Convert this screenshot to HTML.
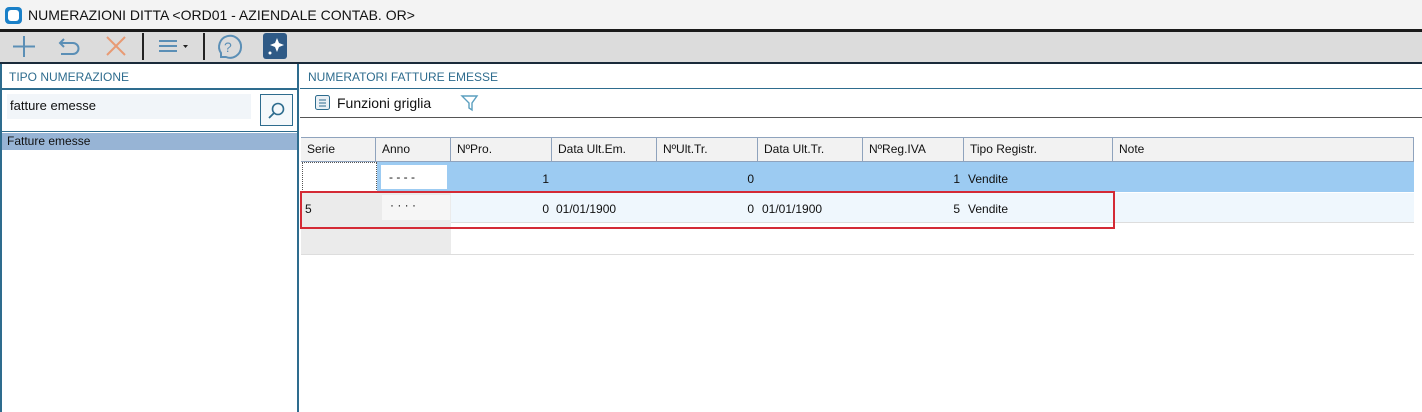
<!DOCTYPE html>
<html><head><style>
*{margin:0;padding:0;box-sizing:border-box}
body{width:1422px;height:412px;overflow:hidden;background:#fff;font-family:"Liberation Sans","DejaVu Sans",sans-serif;font-size:12px;color:#111;position:relative}
.a{position:absolute}
.hd{position:absolute;top:137px;height:25px;background:#f2f2f2;border-right:1px solid #8fa3bd;border-bottom:1px solid #8fa3bd;border-top:1px solid #8fa3bd;padding:4px 0 0 6px}
.c{position:absolute;height:30px;padding-top:10px}
</style></head><body>
<div class="a" style="left:0;top:0;width:1422px;height:30px;background:#f3f3f3"></div>
<div class="a" style="left:5px;top:7px;width:17px;height:17px;background:#1a80c8;border-radius:4px"><div style="margin:3px;width:11px;height:11px;background:#fff;border-radius:3px"></div></div>
<div class="a" style="left:28px;top:7px;font-size:14px;color:#111">NUMERAZIONI DITTA &lt;ORD01 - AZIENDALE CONTAB. OR&gt;</div>
<div class="a" style="left:0;top:29px;width:1422px;height:3px;background:#1a1a1a"></div>
<div class="a" style="left:0;top:32px;width:1422px;height:30px;background:#dcdcdc"></div>
<svg class="a" style="left:0;top:32px" width="300" height="30">
<path d="M24 4v21M13 14.5h22" stroke="#5b8fb6" stroke-width="2" fill="none"/>
<path d="M64 7l-4 4 4 4M60 11h13a5.5 5.5 0 010 11H61" stroke="#5b8fb6" stroke-width="2" fill="none"/>
<path d="M107 5l18 18M125 5L107 23" stroke="#e89a74" stroke-width="2" fill="none"/>
<rect x="142" y="1" width="2" height="27" fill="#222"/>
<path d="M159 9h18M159 14h18M159 19h18" stroke="#5b8fb6" stroke-width="2"/><path d="M183 13h5l-2.5 3z" fill="#222"/>
<rect x="203" y="1" width="2" height="27" fill="#222"/>
<path d="M221 25v-4a11 11 0 1 1 5 4z" stroke="#5b8fb6" stroke-width="2" fill="none"/>
<text x="224" y="20" font-size="14" fill="#5b8fb6" font-family="Liberation Sans">?</text>
<rect x="263" y="1" width="24" height="26" rx="3" fill="#2f5a86"/>
<path d="M277 6l2 5 5 2-5 2-2 5-2-5-5-2 5-2z" fill="#fff"/><circle cx="270" cy="21" r="1.5" fill="#fff"/>
</svg>
<div class="a" style="left:0;top:62px;width:1422px;height:2px;background:#1a2a3a"></div>
<div class="a" style="left:0;top:64px;width:299px;height:348px;border-left:2px solid #2e6c8e;border-right:2px solid #2e6c8e"></div>
<div class="a" style="left:9px;top:70px;color:#2e6c8e;font-size:12px">TIPO NUMERAZIONE</div>
<div class="a" style="left:0;top:88px;width:299px;height:2px;background:#2e6c8e"></div>
<div class="a" style="left:2px;top:131px;width:295px;height:1px;background:#2e6c8e"></div>
<div class="a" style="left:7px;top:94px;width:244px;height:25px;background:#f1f5f9;padding:4px 0 0 3px;font-size:13px">fatture emesse</div>
<div class="a" style="left:260px;top:94px;width:33px;height:32px;border:1px solid #2e6c8e;background:#f4f8fb"></div>
<svg class="a" style="left:266px;top:100px" width="22" height="22"><circle cx="12" cy="9" r="5.5" stroke="#2e6c8e" stroke-width="1.6" fill="none"/><path d="M8 13l-5 5" stroke="#2e6c8e" stroke-width="1.8"/></svg>
<div class="a" style="left:2px;top:133px;width:295px;height:17px;background:#97b4d5;padding:1px 0 0 5px">Fatture emesse</div>
<div class="a" style="left:308px;top:70px;color:#2e6c8e">NUMERATORI FATTURE EMESSE</div>
<div class="a" style="left:300px;top:88px;width:1122px;height:1px;background:#2e6c8e"></div>
<svg class="a" style="left:314px;top:94px" width="18" height="18"><rect x="1.5" y="1.5" width="14" height="14" rx="2" stroke="#2e6c8e" fill="#eaf0f5"/><path d="M5 6h7M5 9h7M5 12h7" stroke="#2e6c8e"/></svg>
<div class="a" style="left:337px;top:95px;font-size:14px">Funzioni griglia</div>
<svg class="a" style="left:460px;top:93px" width="20" height="20"><path d="M2 3h15l-5 7v7l-3-2v-5z" stroke="#5b9fbf" stroke-width="1.4" fill="none"/></svg>
<div class="a" style="left:300px;top:117px;width:1122px;height:1px;background:#555"></div>
<div class="hd" style="left:301px;width:75px">Serie</div>
<div class="hd" style="left:376px;width:75px">Anno</div>
<div class="hd" style="left:451px;width:101px">NºPro.</div>
<div class="hd" style="left:552px;width:105px">Data Ult.Em.</div>
<div class="hd" style="left:657px;width:101px">NºUlt.Tr.</div>
<div class="hd" style="left:758px;width:105px">Data Ult.Tr.</div>
<div class="hd" style="left:863px;width:101px">NºReg.IVA</div>
<div class="hd" style="left:964px;width:149px">Tipo Registr.</div>
<div class="hd" style="left:1113px;width:301px">Note</div>
<div class="a" style="left:377px;top:162px;width:1037px;height:30px;background:#9ccbf2"></div>
<div class="a" style="left:302px;top:162px;width:75px;height:30px;background:#fff;border:1px dotted #555"></div>
<div class="a" style="left:381px;top:165px;width:66px;height:24px;background:#fff;padding:5px 0 0 8px">- - - -</div>
<div class="c" style="left:451px;top:162px;width:98px;text-align:right">1</div>
<div class="c" style="left:657px;top:162px;width:97px;text-align:right">0</div>
<div class="c" style="left:863px;top:162px;width:97px;text-align:right">1</div>
<div class="c" style="left:968px;top:162px">Vendite</div>
<div class="a" style="left:301px;top:193px;width:1113px;height:30px;background:#eff7fd;border-bottom:1px solid #ddd"></div>
<div class="a" style="left:301px;top:193px;width:150px;height:61px;background:#ebebeb"></div>
<div class="a" style="left:382px;top:195px;width:68px;height:25px;background:#f6f6f6;padding:3px 0 0 8px">· · · ·</div>
<div class="c" style="left:305px;top:192px">5</div>
<div class="c" style="left:451px;top:192px;width:98px;text-align:right">0</div>
<div class="c" style="left:556px;top:192px">01/01/1900</div>
<div class="c" style="left:657px;top:192px;width:97px;text-align:right">0</div>
<div class="c" style="left:762px;top:192px">01/01/1900</div>
<div class="c" style="left:863px;top:192px;width:97px;text-align:right">5</div>
<div class="c" style="left:968px;top:192px">Vendite</div>
<div class="a" style="left:301px;top:254px;width:1113px;height:1px;background:#ddd"></div>
<div class="a" style="left:300px;top:191px;width:815px;height:38px;border:2px solid #d42a35"></div>
</body></html>
